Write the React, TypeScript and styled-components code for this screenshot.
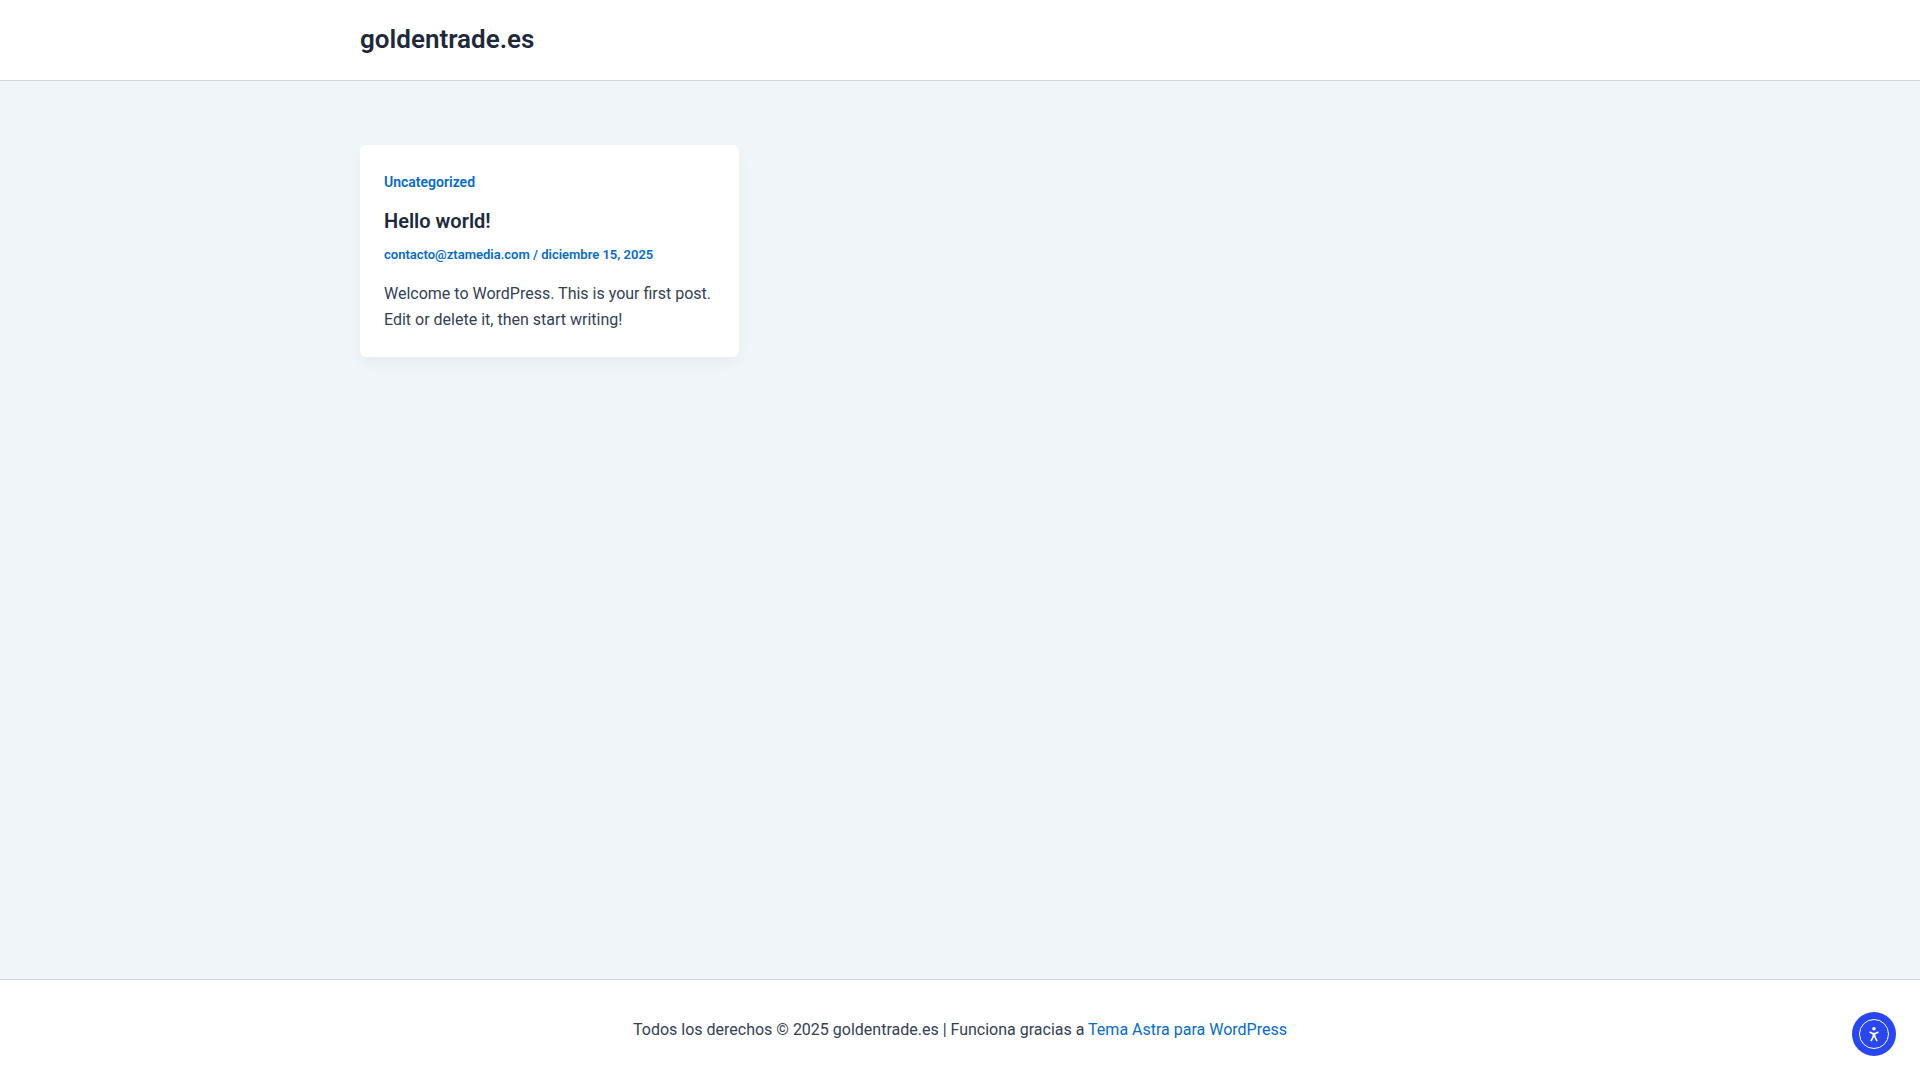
import React from "react";
import styled, { createGlobalStyle } from "styled-components";

const GlobalStyle = createGlobalStyle`
  *, *::before, *::after { box-sizing: border-box; }
  body {
    margin: 0;
    background: #f0f5fa;
    color: #334155;
    font: 400 16px/26px Roboto, "Liberation Sans", sans-serif;
  }
  a { color: #046bd2; text-decoration: none; }
  h1, h2, p { margin: 0; }
`;

const Page = styled.div`
  display: flex;
  flex-direction: column;
  min-height: 100vh;
`;

const Header = styled.header`
  background: #fff;
  border-bottom: 1px solid #d1d5db;
`;

const Container = styled.div`
  width: 100%;
  max-width: 1240px;
  margin: 0 auto;
  padding: 0 20px;
`;

const Branding = styled(Container)`
  padding-top: 24px;
  padding-bottom: 26px;
`;

const SiteTitle = styled.h1`
  font-size: 26px;
  font-weight: 600;
  line-height: 30px;
  a { color: #1e293b; }
`;

const Main = styled.main`
  flex: 1;
  padding: 64px 0;
`;

const Grid = styled.div`
  display: grid;
  grid-template-columns: repeat(3, minmax(0, 1fr));
  gap: 32px;
`;

const Card = styled.article`
  background: #fff;
  border-radius: 6px;
  padding: 24px;
  box-shadow: 0 6px 15px -2px rgba(16, 24, 40, 0.05);
`;

const Category = styled.a`
  display: block;
  width: fit-content;
  font-size: 14px;
  font-weight: 600;
  line-height: 26px;
`;

const PostTitle = styled.h2`
  margin-top: 14px;
  font-size: 20px;
  font-weight: 600;
  line-height: 24px;
  a { color: #1e293b; }
`;

const Meta = styled.div`
  margin-top: 12px;
  color: #046bd2;
  font-size: 13px;
  font-weight: 600;
  line-height: 20px;
`;

const Excerpt = styled.p`
  margin-top: 16px;
`;

const Footer = styled.footer`
  padding: 37px 20px;
  background: #fff;
  border-top: 1px solid #d1d5db;
  text-align: center;
`;

const AccessButton = styled.button`
  position: fixed;
  right: 24px;
  bottom: 24px;
  width: 44px;
  height: 44px;
  padding: 0;
  border: 0;
  border-radius: 50%;
  background: #2847f2;
  cursor: pointer;
  svg { display: block; }
`;

export default function App() {
  return (
    <Page>
      <GlobalStyle />
      <Header>
        <Branding>
          <SiteTitle><a href="#">goldentrade.es</a></SiteTitle>
        </Branding>
      </Header>
      <Main>
        <Container>
          <Grid>
            <Card>
              <Category href="#">Uncategorized</Category>
              <PostTitle><a href="#">Hello world!</a></PostTitle>
              <Meta>
                <a href="#">contacto@ztamedia.com</a> / <span>diciembre 15, 2025</span>
              </Meta>
              <Excerpt>
                Welcome to WordPress. This is your first post. Edit or delete it, then start writing!
              </Excerpt>
            </Card>
          </Grid>
        </Container>
      </Main>
      <Footer>
        <p>
          Todos los derechos © 2025 goldentrade.es | Funciona gracias a <a href="#">Tema Astra para WordPress</a>
        </p>
      </Footer>
      <AccessButton type="button" aria-label="Accesibilidad">
        <svg width="44" height="44" viewBox="0 0 44 44" fill="none" aria-hidden="true">
          <circle cx="22" cy="22" r="14.5" stroke="#fff" />
          <circle cx="22" cy="16.8" r="1.8" fill="#fff" />
          <path d="M18 20.2l2.8 1.3h2.4l2.8-1.3" stroke="#fff" strokeWidth="1.5" strokeLinecap="round" strokeLinejoin="round" />
          <path d="M20.6 21h2.8v3.5h-2.8z" fill="#fff" />
          <path d="M21.4 24.3l-2.2 4.3M22.6 24.3l2.2 4.3" stroke="#fff" strokeWidth="1.6" strokeLinecap="round" />
        </svg>
      </AccessButton>
    </Page>
  );
}
